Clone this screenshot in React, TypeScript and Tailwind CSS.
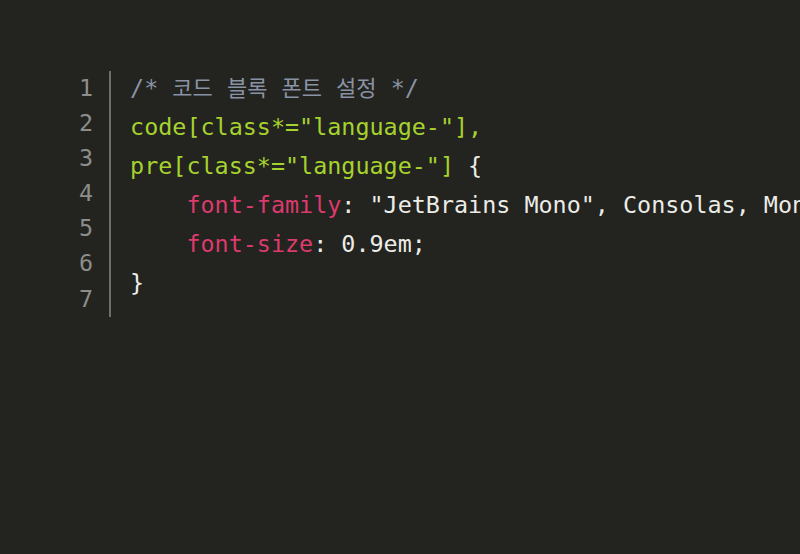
import React from "react";

const mono = "font-['DejaVu_Sans_Mono','Liberation_Mono',monospace]";

// 한글은 폭이 좁게 보이도록 별도 크기
const Ko = ({ children }: { children: string }) => (
  <span className="font-['Noto_Sans_CJK_KR',sans-serif] text-[22px]">{children}</span>
);

const G = ({ children }: { children: React.ReactNode }) => <span className="text-[#a6d22e]">{children}</span>;
const P = ({ children }: { children: React.ReactNode }) => <span className="text-[#dc3a6c]">{children}</span>;

const App = () => {
  const lines = [1, 2, 3, 4, 5, 6, 7];

  return (
    <main className={`w-[800px] h-[554px] bg-[#232320] overflow-hidden ${mono} text-[23.4px]`}>
      <div className="flex items-start pt-[71px] pl-[79px]">
        {/* line numbers */}
        <div className="flex flex-col items-end pr-[16px] border-r-2 border-[#6e6e6a] text-[#8d8d8a] leading-[35.1px] w-[41px]">
          {lines.map(n => (
            <span key={n}>{n}</span>
          ))}
        </div>

        {/* code */}
        <pre className={`pl-[19px] -mt-[4px] leading-[39px] text-[#ecece6] whitespace-pre ${mono}`}>
          <div className="text-[#8a93a3]">
            {"/* "}<Ko>코드</Ko>{" "}<Ko>블록</Ko>{" "}<Ko>폰트</Ko>{" "}<Ko>설정</Ko>{" */"}
          </div>
          <div><G>{'code[class*="language-"],'}</G></div>
          <div><G>{'pre[class*="language-"]'}</G>{" {"}</div>
          <div>{"    "}<P>font-family</P>{': "JetBrains Mono", Consolas, Monaco, monospace;'}</div>
          <div>{"    "}<P>font-size</P>{": 0.9em;"}</div>
          <div>{"}"}</div>
        </pre>
      </div>
    </main>
  );
};

export default App;
